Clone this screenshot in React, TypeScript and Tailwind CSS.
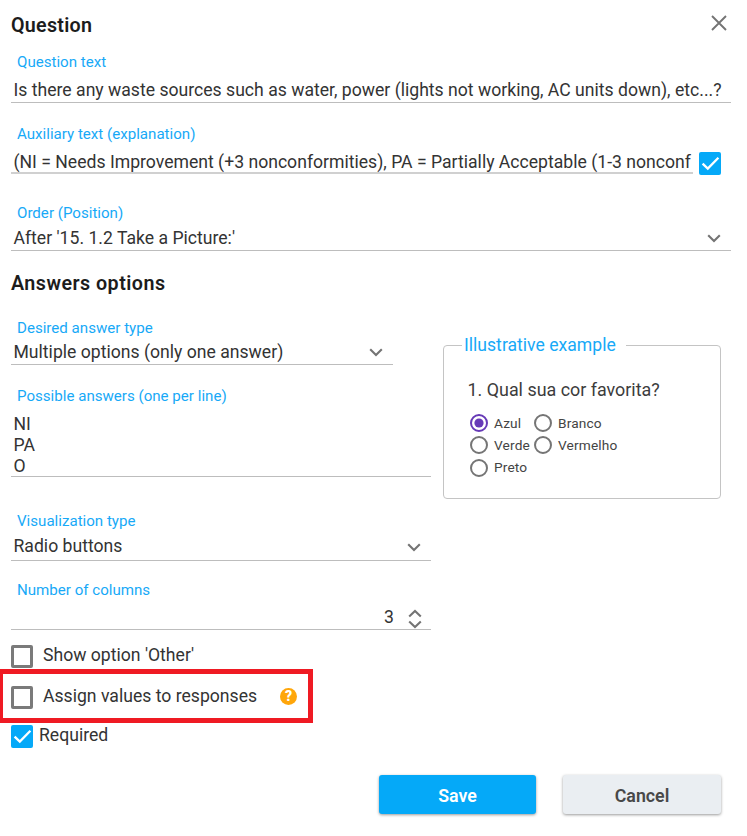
import React from "react";

const Chevron = ({ className = "" }: { className?: string }) => (
  <svg viewBox="0 0 14 9" className={`h-[9px] w-[14px] shrink-0 ${className}`} fill="none" stroke="#747474" strokeWidth="2.1">
    <path d="M1.2 1.3 7 7 12.8 1.3" />
  </svg>
);

const Label = ({ children, className = "" }: { children: React.ReactNode; className?: string }) => (
  <div className={`h-5 pl-[6px] text-[15.1px] leading-[21px] text-[#17a9f7] ${className}`}>{children}</div>
);

const Checkbox = ({ checked = false }: { checked?: boolean }) =>
  checked ? (
    <span className="flex h-[23px] w-[22px] shrink-0 items-center justify-center rounded-[2px] bg-[#05a9f8]">
      <svg viewBox="0 0 23 23" className="h-[23px] w-[23px] shrink-0" fill="none" stroke="#fff" strokeWidth="2.3">
        <path d="M3.6 11.6 8.8 16.6 19.4 5.8" />
      </svg>
    </span>
  ) : (
    <span className="h-[23px] w-[22px] shrink-0 rounded-[2px] border-3 border-[#7a7a7a]" />
  );

const Radio = ({ label, checked = false }: { label: string; checked?: boolean }) => (
  <div className="flex h-[22.3px] items-center">
    <svg viewBox="0 0 18 18" className="h-[18px] w-[18px] shrink-0" fill="none">
      <circle cx="9" cy="9" r="8" stroke={checked ? "#673ab7" : "#757575"} strokeWidth="2" />
      {checked && <circle cx="9" cy="9" r="4.6" fill="#673ab7" />}
    </svg>
    <span className="mb-px ml-[6.5px] text-[13.7px] leading-[18px] tracking-[0.15px] text-[#444]">{label}</span>
  </div>
);

export default function App() {
  return (
    <div className="h-[836px] w-[747px] overflow-hidden bg-white font-['Roboto',sans-serif] text-[17.63px] text-[#333]">
      <header className="flex h-[50px] items-center justify-between pr-[20px] pl-[11px]">
        <h2 className="mt-[2px] text-[19.7px] font-semibold tracking-[0.25px] text-[#1c1c1c]">Question</h2>
        <svg viewBox="0 0 16 16" className="mb-[5px] h-4 w-4" fill="none" stroke="#747474" strokeWidth="1.9">
          <path d="M1 1 15 15M15 1 1 15" />
        </svg>
      </header>

      <main className="pl-[11px]">
        <Label className="mt-[2px]">Question text</Label>
        <div className="mt-[5px] flex h-[26px] w-[720px] items-center border-b border-[#bdbdbd] pt-[2px] pl-[2.5px] whitespace-nowrap">
          Is there any waste sources such as water, power (lights not working, AC units down), etc...?
        </div>

        <Label className="mt-[21px]">Auxiliary text (explanation)</Label>
        <div className="mt-[5px] flex h-[26px] items-start">
          <div className="flex h-[25px] w-[682px] items-center border-b-2 border-[#d0d0d0] pt-[4px] pl-[2.5px] whitespace-nowrap">
            (NI = Needs Improvement (+3 nonconformities), PA = Partially Acceptable (1-3 nonconf
          </div>
          <div className="mt-[3px] ml-[6px]"><Checkbox checked /></div>
        </div>

        <Label className="mt-[28px]">Order (Position)</Label>
        <div className="flex h-[28px] w-[720px] items-center justify-between border-b border-[#bdbdbd] pr-[10px] pl-[2.5px]">
          <span className="mt-[3px]">After '15. 1.2 Take a Picture:'</span>
          <Chevron className="mt-[3px]" />
        </div>

        <h2 className="mt-[20px] h-6 text-[19.7px] leading-[26px] font-semibold tracking-[0.47px] text-[#1c1c1c]">Answers options</h2>

        <div className="flex">
          <div className="w-[431.5px] shrink-0">
            <Label className="mt-[23px]">Desired answer type</Label>
            <div className="flex h-[27px] w-[382px] items-center justify-between border-b border-[#bdbdbd] pr-[10px] pl-[2.5px]">
              <span className="mt-[2px]">Multiple options (only one answer)</span>
              <Chevron className="mt-[3px]" />
            </div>

            <Label className="mt-[21px]">Possible answers (one per line)</Label>
            <div className="mt-[6px] h-[65px] w-[420px] border-b border-[#bdbdbd] pt-[1.5px] pl-[2.5px] leading-[21.2px]">
              <div>NI</div>
              <div>PA</div>
              <div>O</div>
            </div>

            <Label className="mt-[34px]">Visualization type</Label>
            <div className="flex h-[30px] w-[420px] items-center justify-between border-b border-[#bdbdbd] pr-[10px] pl-[2.5px]">
              <span className="mt-[2px]">Radio buttons</span>
              <Chevron className="mt-[3px]" />
            </div>

            <Label className="mt-[19px]">Number of columns</Label>
            <div className="mt-[5px] flex h-[25px] w-[420px] items-center justify-end border-b border-[#bdbdbd] pr-[9px]">
              <span className="mt-px">3</span>
              <svg viewBox="0 0 14 20" className="mt-[3px] ml-[14px] h-5 w-[14px]" fill="none" stroke="#747474" strokeWidth="2.1">
                <path d="M1.2 7.5 7 2 12.8 7.5M1.2 12.5 7 18 12.8 12.5" />
              </svg>
            </div>
          </div>

          <fieldset className="mt-[39px] h-[165px] w-[278px] rounded-[4px] border border-[#c4c4c4] pl-[18px]">
            <legend className="h-[22px] pr-[10px] pl-[2.5px] text-[17.6px] leading-[22px] text-[#17a9f7]">Illustrative example</legend>
            <div className="mt-[23px] h-[22px] pl-[6px] text-[17.9px] leading-[22px] text-[#3c3c3c]">1. Qual sua cor favorita?</div>
            <div className="mt-[11px] grid grid-cols-[64px_1fr] pl-[8px]">
              <Radio label="Azul" checked />
              <Radio label="Branco" />
              <Radio label="Verde" />
              <Radio label="Vermelho" />
              <Radio label="Preto" />
            </div>
          </fieldset>
        </div>
      </main>

      <div className="mt-[15px] flex h-[24px] items-start pl-[11px]">
        <Checkbox />
        <span className="ml-[10px] leading-[21px]">Show option 'Other'</span>
      </div>
      <div className="flex h-[54px] w-[313px] items-center border-5 border-l-3 border-[#ef1a23] pl-[8px]">
        <span className="mt-[2px] flex"><Checkbox /></span>
        <span className="ml-[10px]">Assign values to responses</span>
        <span className="ml-[23px] flex h-[17px] w-[17px] items-center justify-center rounded-full bg-[#ffa60a] text-[14px] leading-none font-black text-white">?</span>
      </div>
      <div className="mt-[2px] flex h-[23px] items-start pl-[11px]">
        <Checkbox checked />
        <span className="ml-[6px] leading-[20px]">Required</span>
      </div>

      <footer className="mt-[27px] flex gap-[27px] pl-[379px] text-[17.8px] font-semibold">
        <button className="h-[39px] w-[157px] rounded-[3px] bg-[#05a9f8] pt-[3px] text-white shadow-[0_1px_3px_rgba(0,0,0,0.4)]">Save</button>
        <button className="h-[39px] w-[158px] rounded-[3px] bg-[#eaeef2] pt-[3px] text-[#484848] shadow-[0_1px_3px_rgba(0,0,0,0.4)]">Cancel</button>
      </footer>
    </div>
  );
}
